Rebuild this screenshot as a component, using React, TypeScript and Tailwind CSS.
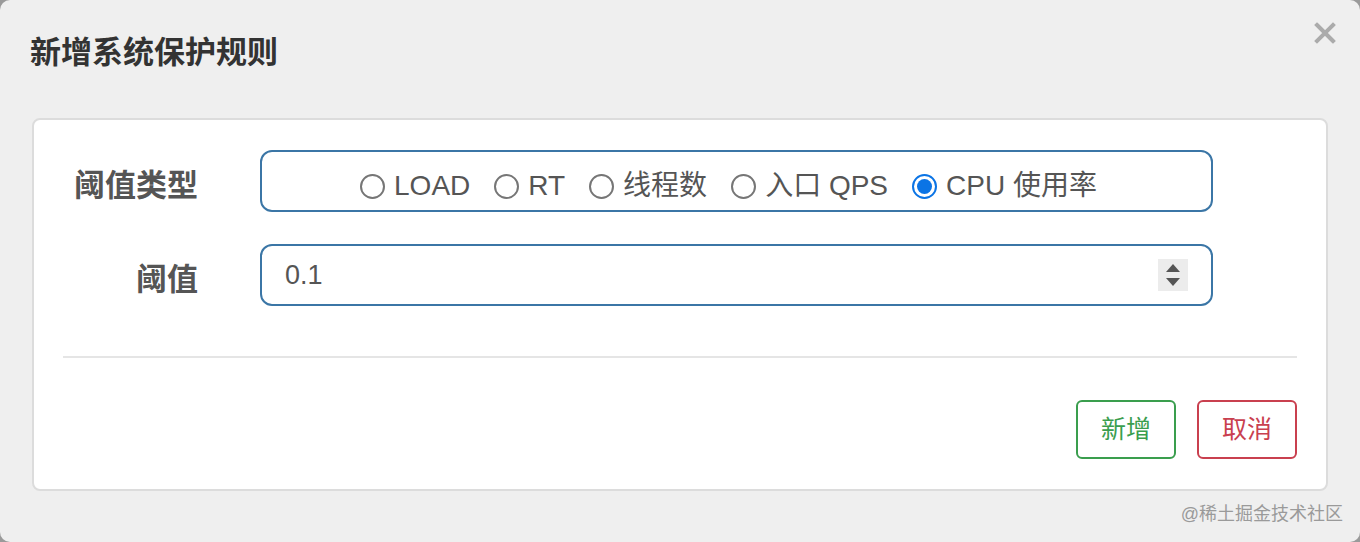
import React from "react";

const font = { fontFamily: '"Liberation Sans", "Noto Sans CJK SC", sans-serif' };

function Radio({ label, checked }: { label: string; checked?: boolean }) {
  return (
    <label className="flex items-center gap-[9px]">
      {checked ? (
        <span className="flex h-[25px] w-[25px] items-center justify-center rounded-full border-[2px] border-[#0b74e5] bg-white">
          <span className="h-[15px] w-[15px] rounded-full bg-[#0b74e5]" />
        </span>
      ) : (
        <span className="h-[25px] w-[25px] rounded-full border-[2px] border-[#767676] bg-white" />
      )}
      <span>{label}</span>
    </label>
  );
}

export default function App() {
  return (
    <div className="h-[542px] w-[1360px] bg-[#9a9a9a]" style={font}>
      <div className="relative flex h-full w-full flex-col rounded-[10px] bg-[#efefef]">
        <div className="flex items-start justify-between pl-[30px] pr-[24px] pt-[34px]">
          <h1 className="text-[31px] font-bold leading-[38px] text-[#333]">新增系统保护规则</h1>
          <svg width="22" height="22" viewBox="0 0 22 22" className="mt-[-12px]">
            <path d="M3 3 L19 19 M19 3 L3 19" stroke="#ababab" strokeWidth="4" strokeLinecap="square" />
          </svg>
        </div>

        <div className="mx-[32px] mt-[46px] rounded-[8px] border-[2px] border-[#dcdcdc] bg-white">
          <div className="flex flex-col gap-[32px] pl-[30px] pr-[113px] pt-[30px]">
            <div className="flex items-center gap-[62px]">
              <div className="w-[134px] pt-[10px] text-right text-[31px] font-bold text-[#555]">阈值类型</div>
              <div className="flex h-[62px] w-[953px] items-center justify-center gap-[24px] rounded-[12px] border-[2px] border-[#3b76a6] pr-[16px] pt-[10px] text-[28px] text-[#555]">
                <Radio label="LOAD" />
                <Radio label="RT" />
                <Radio label="线程数" />
                <Radio label="入口 QPS" />
                <Radio label="CPU 使用率" checked />
              </div>
            </div>
            <div className="flex items-center gap-[62px]">
              <div className="w-[134px] pt-[10px] text-right text-[31px] font-bold text-[#555]">阈值</div>
              <div className="flex h-[62px] w-[953px] items-center justify-between rounded-[12px] border-[2px] border-[#3b76a6] pl-[23px] pr-[23px] text-[27px] text-[#555]">
                <span>0.1</span>
                <div className="flex h-[32px] w-[30px] flex-col items-center justify-center gap-[6px] bg-[#ececec]">
                  <svg width="14" height="8" viewBox="0 0 14 8"><path d="M7 0 L14 8 L0 8 Z" fill="#555" /></svg>
                  <svg width="14" height="8" viewBox="0 0 14 8"><path d="M0 0 L14 0 L7 8 Z" fill="#555" /></svg>
                </div>
              </div>
            </div>
          </div>
          <div className="mx-[29px] mt-[50px] h-[2px] bg-[#e5e5e5]" />
          <div className="flex justify-end gap-[21px] pb-[30px] pr-[29px] pt-[42px]">
            <button className="h-[59px] w-[100px] rounded-[6px] border-[2px] border-[#3a9e4e] text-[25px] text-[#3a9e4e]">新增</button>
            <button className="h-[59px] w-[100px] rounded-[6px] border-[2px] border-[#c9404f] text-[25px] text-[#c9404f]">取消</button>
          </div>
        </div>

        <div className="absolute bottom-[14px] right-[17px] text-[18px] text-[#9a9a9a]">@稀土掘金技术社区</div>
      </div>
    </div>
  );
}
